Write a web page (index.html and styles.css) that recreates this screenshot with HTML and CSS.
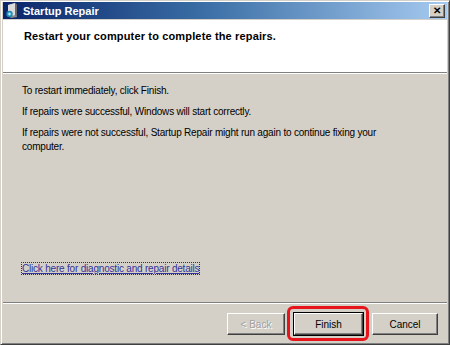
FILE: index.html
```html
<!DOCTYPE html>
<html>
<head>
<meta charset="utf-8">
<link rel="stylesheet" href="styles.css">
</head>
<body>
<div class="window">
  <div class="titlebar">
    <svg class="app-icon" width="14" height="15" viewBox="0 0 14 15">
      <path d="M3 2 L10 0 L12 2 L12 14 L6 15 L3 13 Z" fill="#8a8a8a"/>
      <path d="M3 2 L10 0 L10 12 L3 14 Z" fill="#dcdcdc"/>
      <path d="M10 0 L12 2 L12 14 L10 12 Z" fill="#6a6a6a"/>
      <circle cx="4.5" cy="11" r="3.2" fill="#1f86b0"/>
      <circle cx="4.5" cy="11" r="1.8" fill="#6cc6e6"/>
      <circle cx="4.5" cy="11" r="0.7" fill="#ffffff"/>
    </svg>
    <span class="title">Startup Repair</span>
    <span class="close-btn">✕</span>
  </div>
  <div class="header">
    <h1 class="heading">Restart your computer to complete the repairs.</h1>
  </div>
  <div class="sep"></div>
  <div class="main">
    <p class="line">To restart immediately, click Finish.</p>
    <p class="line">If repairs were successful, Windows will start correctly.</p>
    <p class="line">If repairs were not successful, Startup Repair might run again to continue fixing your computer.</p>
    <div class="link-row"><a class="link" href="#">Click here for diagnostic and repair details</a></div>
  </div>
  <div class="sep"></div>
  <div class="footer">
    <button class="btn btn-disabled">&lt; Back</button>
    <button class="btn btn-default">Finish</button>
    <button class="btn btn-cancel">Cancel</button>
  </div>
</div>
</body>
</html>
```
FILE: styles.css
```css
html, body {
  margin: 0;
  padding: 0;
  background: #d4d0c8;
}
body {
  width: 450px;
  height: 345px;
  overflow: hidden;
  font-family: "Liberation Sans", Arial, sans-serif;
  font-size: 10px;
  letter-spacing: -0.2px;
  color: #000;
}
.window {
  box-sizing: border-box;
  width: 450px;
  height: 345px;
  background: #d4d0c8;
  border: 1px solid;
  border-color: #d4d0c8 #404040 #404040 #d4d0c8;
  box-shadow: inset 1px 1px #ffffff, inset -1px -1px #808080;
  padding: 1px 2px 2px 2px;
  display: flex;
  flex-direction: column;
}
.titlebar {
  height: 17px;
  flex: none;
  background: linear-gradient(to right, #0a246a 0%, #3a6ea5 45%, #a6caf0 100%);
  display: flex;
  align-items: center;
  padding: 0 2px 0 2px;
  color: #fff;
}
.app-icon {
  flex: none;
  margin-right: 4px;
}
.title {
  font-weight: bold;
  font-size: 11px;
  letter-spacing: 0;
  flex: 1;
}
.close-btn {
  box-sizing: border-box;
  width: 16px;
  height: 14px;
  background: #d4d0c8;
  border: 1px solid;
  border-color: #ffffff #404040 #404040 #ffffff;
  box-shadow: inset -1px -1px #808080;
  color: #000;
  font-size: 10px;
  font-weight: bold;
  letter-spacing: 0;
  display: flex;
  align-items: center;
  justify-content: center;
  line-height: 1;
}
.header {
  margin-top: 1px;
  height: 52px;
  flex: none;
  background: #fff;
  padding: 9px 0 0 21px;
  box-sizing: border-box;
}
.heading {
  margin: 0;
  font-size: 11px;
  letter-spacing: 0.15px;
  line-height: 14px;
  font-weight: bold;
}
.sep {
  flex: none;
  border-top: 1px solid #808080;
  border-bottom: 1px solid #ffffff;
}
.main {
  flex: 1;
  display: flex;
  flex-direction: column;
  padding: 10px 18px 28px 19px;
}
.line {
  margin: 0 0 7px 0;
  line-height: 14px;
  max-width: 370px;
}
.link-row {
  margin-top: auto;
}
.link {
  color: #33339a;
  text-decoration: underline;
  outline: 1px dotted #333;
  outline-offset: 0;
}
.footer {
  flex: none;
  height: 38px;
  display: flex;
  align-items: center;
  justify-content: flex-end;
  gap: 9px;
  padding-right: 9px;
  padding-top: 2px;
  box-sizing: border-box;
}
.btn {
  box-sizing: border-box;
  height: 22px;
  width: 58px;
  font-family: "Liberation Sans", Arial, sans-serif;
  font-size: 10px;
  letter-spacing: 0;
  color: #000;
  background: #d4d0c8;
  border: 1px solid;
  border-color: #ffffff #404040 #404040 #ffffff;
  box-shadow: inset -1px -1px #808080;
  padding: 0;
}
.btn-disabled {
  color: #a0a0a0;
  text-shadow: 1px 1px #ffffff;
}
.btn-default {
  width: 69px;
  position: relative;
  outline: 1px solid #000;
  outline-offset: 0;
}
.btn-default::after {
  content: "";
  position: absolute;
  left: -8px;
  right: -7px;
  top: -8px;
  bottom: -7px;
  border: 3px solid #e8141c;
  border-radius: 6px;
}
.btn-cancel {
  width: 66px;
}
```
